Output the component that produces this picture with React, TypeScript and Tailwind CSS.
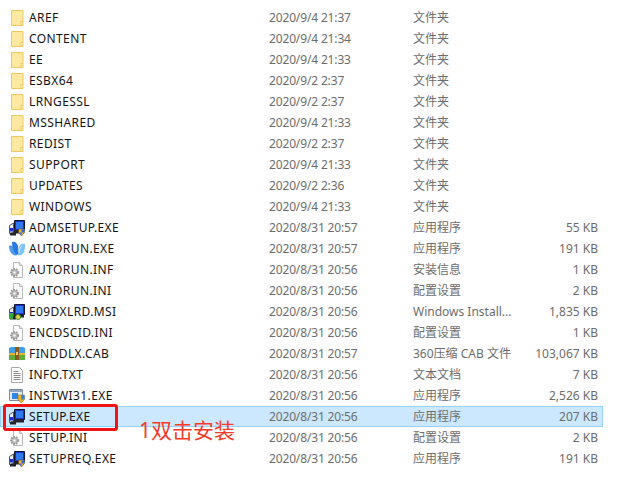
const FONT = "font-['Noto_Sans','Noto_Sans_CJK_SC',sans-serif]";

type Kind = "folder" | "setup" | "shield" | "autorun" | "ini" | "msi" | "cab" | "txt" | "inst";

const rows: { name: string; date: string; type: string; size?: string; icon: Kind }[] = [
  { name: "AREF", date: "2020/9/4 21:37", type: "文件夹", icon: "folder" },
  { name: "CONTENT", date: "2020/9/4 21:34", type: "文件夹", icon: "folder" },
  { name: "EE", date: "2020/9/4 21:33", type: "文件夹", icon: "folder" },
  { name: "ESBX64", date: "2020/9/2 2:37", type: "文件夹", icon: "folder" },
  { name: "LRNGESSL", date: "2020/9/2 2:37", type: "文件夹", icon: "folder" },
  { name: "MSSHARED", date: "2020/9/4 21:33", type: "文件夹", icon: "folder" },
  { name: "REDIST", date: "2020/9/2 2:37", type: "文件夹", icon: "folder" },
  { name: "SUPPORT", date: "2020/9/4 21:33", type: "文件夹", icon: "folder" },
  { name: "UPDATES", date: "2020/9/2 2:36", type: "文件夹", icon: "folder" },
  { name: "WINDOWS", date: "2020/9/4 21:33", type: "文件夹", icon: "folder" },
  { name: "ADMSETUP.EXE", date: "2020/8/31 20:57", type: "应用程序", size: "55 KB", icon: "shield" },
  { name: "AUTORUN.EXE", date: "2020/8/31 20:57", type: "应用程序", size: "191 KB", icon: "autorun" },
  { name: "AUTORUN.INF", date: "2020/8/31 20:56", type: "安装信息", size: "1 KB", icon: "ini" },
  { name: "AUTORUN.INI", date: "2020/8/31 20:56", type: "配置设置", size: "2 KB", icon: "ini" },
  { name: "E09DXLRD.MSI", date: "2020/8/31 20:56", type: "Windows Install...", size: "1,835 KB", icon: "msi" },
  { name: "ENCDSCID.INI", date: "2020/8/31 20:56", type: "配置设置", size: "1 KB", icon: "ini" },
  { name: "FINDDLX.CAB", date: "2020/8/31 20:57", type: "360压缩 CAB 文件", size: "103,067 KB", icon: "cab" },
  { name: "INFO.TXT", date: "2020/8/31 20:56", type: "文本文档", size: "7 KB", icon: "txt" },
  { name: "INSTWI31.EXE", date: "2020/8/31 20:56", type: "应用程序", size: "2,526 KB", icon: "inst" },
  { name: "SETUP.EXE", date: "2020/8/31 20:56", type: "应用程序", size: "207 KB", icon: "setup" },
  { name: "SETUP.INI", date: "2020/8/31 20:56", type: "配置设置", size: "2 KB", icon: "ini" },
  { name: "SETUPREQ.EXE", date: "2020/8/31 20:56", type: "应用程序", size: "191 KB", icon: "shield" },
];

function FileIcon({ kind }: { kind: Kind }) {
  if (kind === "folder") {
    return (
      <svg width="16" height="16" viewBox="0 0 16 16">
        <path d="M2.500 .5h11.500v15H2.500z" fill="#fde9a2" stroke="#ecc95a" />
        <path d="M12 15.500v-4h2" fill="#fff3c4" stroke="#ecc95a" />
      </svg>
    );
  }
  if (kind === "ini") {
    return (
      <svg width="16" height="16" viewBox="0 0 16 16">
        <path d="M4.500 .5h6l3 3v12h-9z" fill="#fbfbfb" stroke="#b9b9b9" />
        <path d="M10.500 .5v3h3" fill="#e8e8e8" stroke="#b9b9b9" />
        <circle cx="5.500" cy="10.500" r="3.500" fill="#b8b8b8" stroke="#9a9a9a" strokeWidth="2" strokeDasharray="1.500 1" />
        <circle cx="5.500" cy="10.500" r="1.300" fill="#f0f0f0" />
      </svg>
    );
  }
  if (kind === "txt") {
    return (
      <svg width="16" height="16" viewBox="0 0 16 16">
        <path d="M2.500 .5h8l3 3v12h-11z" fill="#fff" stroke="#a8a8a8" />
        <path d="M4.500 4.500h5M4.500 6.500h7M4.500 8.500h7M4.500 10.500h7M4.500 12.500h7" stroke="#8c8c8c" />
      </svg>
    );
  }
  if (kind === "autorun") {
    return (
      <svg width="16" height="16" viewBox="0 0 16 16">
        <path d="M0 5c2-1 4 0 5 2l3 7c-2 1-4 0-5-1C1 11 0 8 0 5z" fill="#4f9cec" />
        <path d="M3 1c3-1 5 1 6 4l1 8c-2 1-3 1-4-1C4 9 3 5 3 1z" fill="#2a78e0" />
        <path d="M16 3c-3-1-5 0-6 3L9 14c3 1 5-1 6-3 1-3 1-5 1-8z" fill="#7cc2f7" />
        <path d="M13 5c-2 1-3 4-3 7" stroke="#d6ecff" fill="none" />
      </svg>
    );
  }
  if (kind === "cab") {
    return (
      <svg width="16" height="16" viewBox="0 0 16 16">
        <path d="M0 2l2-1h12l2 1v5H0z" fill="#3f9fe6" />
        <path d="M0 7h16v2H0z" fill="#eeb22a" />
        <path d="M0 9h16v5H0z" fill="#62ad3a" />
        <path d="M6 1h4v13H6z" fill="#8a5a1e" />
        <path d="M7 6h2v3H7z" fill="#f0d070" />
      </svg>
    );
  }
  if (kind === "inst") {
    return (
      <svg width="16" height="16" viewBox="0 0 16 16">
        <path d="M.5 1.500h13v11H.5z" fill="#e6e9ee" stroke="#7d8b9c" />
        <path d="M1 2h12v2H1z" fill="#8fa4c0" />
        <path d="M3 5h6v6H3z" fill="#2f86e6" />
        <path d="M9 7h6.500v4.500L12.200 15 9 11.500z" fill="#f0b429" stroke="#8a6a10" strokeWidth=".5" />
        <path d="M12.200 7h3.300v4.500h-3.300z" fill="#2f86e6" />
      </svg>
    );
  }
  // installer icon: monitor behind a small disk
  return (
    <svg width="16" height="16" viewBox="0 0 16 16">
      <path d="M5.500 .5h10v10h-10z" fill="#1c2fd0" stroke="#14142e" />
      <path d="M7 2h7v7H7z" fill="#2f79f0" />
      <path d="M4 10h11v3.500H4z" fill="#20242c" />
      <path d="M.5 5.500l4-2.500v9l-4 1.500z" fill="#ececec" stroke="#555" />
      <path d="M1 8h3v3.500H1z" fill="#1c2fd0" />
      <path d="M1 13h6v2.500H1z" fill="#20242c" />
      {kind === "shield" && <path d="M9.500 9h6v3.500L12.500 16l-3-3.500z" fill="#f0b429" stroke="#4a3a10" strokeWidth=".5" />}
      {kind === "shield" && <path d="M12.500 9.300h2.800v3.200h-2.800zM9.800 12.500h2.700v3z" fill="#2b6af0" />}
      {kind === "msi" && <path d="M0 9h4v6H0z" fill="#3aa63a" />}
      {kind === "msi" && <circle cx="9" cy="13" r="2.500" fill="#e8d040" stroke="#3a8a3a" />}
    </svg>
  );
}

export default function App() {
  return (
    <div className={`relative h-[488px] w-[644px] overflow-hidden bg-white pt-[7px] text-[12px] ${FONT}`}>
      {rows.map((row) => {
        const selected = row.name === "SETUP.EXE";
        return (
          <div
            key={row.name}
            className={`grid h-[21px] w-[603px] grid-cols-[25px_243px_144px_1fr] items-center border pr-[4px] leading-none ${
              selected ? "border-[#99d1ff] bg-[#cce8ff]" : "border-transparent"
            }`}
          >
            <span className="flex justify-end pr-[1px]">
              <FileIcon kind={row.icon} />
            </span>
            <span className="pl-[3px] tracking-[0.4px] text-[#141414]">{row.name}</span>
            <span className="tracking-[-0.15px] text-[#6d6d6d]">{row.date}</span>
            <span className="flex justify-between whitespace-nowrap text-[#6d6d6d]">
              <span>{row.type}</span>
              <span>{row.size}</span>
            </span>
          </div>
        );
      })}
      <div className="absolute left-[3px] top-[404px] h-[27px] w-[115px] rounded-[3px] border-[3px] border-[#f01414]" />
      <div className="absolute left-[139px] top-[416px] text-[21px] leading-[28px] text-[#f53a2a]">1双击安装</div>
    </div>
  );
}
